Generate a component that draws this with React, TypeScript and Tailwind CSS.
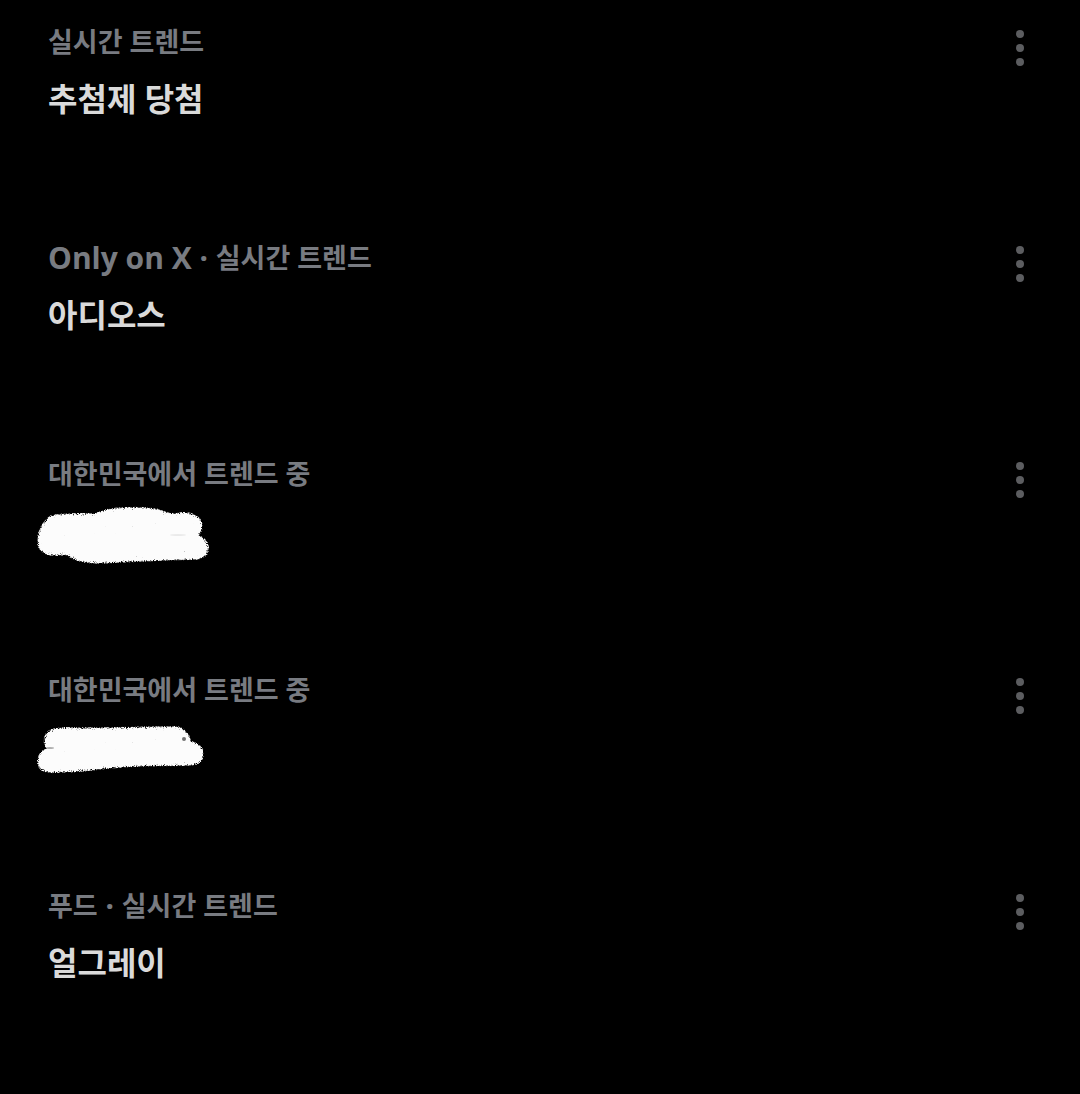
const FONT = "font-['Noto_Sans','Noto_Sans_CJK_KR',sans-serif]";

type Shape = { d: string; holes?: { cx: number; cy: number; rx: number; ry: number; o: number }[] };
type Trend = { prefix?: string; latin?: boolean; context: string; title?: string; scribble?: Shape };

const trends: Trend[] = [
  { context: '실시간 트렌드', title: '추첨제 당첨' },
  { prefix: 'Only on X', latin: true, context: '실시간 트렌드', title: '아디오스' },
  {
    context: '대한민국에서 트렌드 중',
    scribble: {
      d: 'M8 42C8 32 12 23 21 16C34 13 50 14 66 14C76 7 105 7 124 9C132 10 137 15 146 14C160 11 172 16 172 26C172 31 169 34 166 36C174 37 178 42 178 48C178 56 172 59 164 59C140 59 110 61 84 62C62 64 45 62 37 54C24 56 8 56 8 42Z',
      holes: [{ cx: 148, cy: 35, rx: 8, ry: 1, o: 0.07 }],
    },
  },
  {
    context: '대한민국에서 트렌드 중',
    scribble: {
      d: 'M8 45C8 38 13 34 20 33C14 31 14 26 15 21C18 13 24 13 34 12C70 13 110 11 146 11C152 11 154 15 156 17C160 19 160 23 159 26C168 26 173 32 173 38C173 47 166 49 156 49C120 49 90 50 68 53C52 55 38 56 24 56C14 57 8 53 8 45Z',
      holes: [
        { cx: 154, cy: 23, rx: 2, ry: 2, o: 0.55 },
        { cx: 20, cy: 32, rx: 4, ry: 1, o: 0.3 },
      ],
    },
  },
  { prefix: '푸드', context: '실시간 트렌드', title: '얼그레이' },
];

function Scribble({ shape, id }: { shape: Shape; id: string }) {
  return (
    <svg className="absolute -left-4.5 -top-2 h-20 w-60" viewBox="0 0 240 80" aria-hidden="true">
      <defs>
        <filter id={id} x="0" y="0" width="240" height="80" filterUnits="userSpaceOnUse" colorInterpolationFilters="sRGB">
          <feGaussianBlur in="SourceAlpha" stdDeviation="2.5" result="soft" />
          <feTurbulence type="fractalNoise" baseFrequency="0.9" numOctaves="2" seed="4" />
          <feColorMatrix values="0 0 0 0 0  0 0 0 0 0  0 0 0 0 0  1 0 0 0 0" result="noise" />
          <feComposite in="soft" in2="noise" operator="arithmetic" k2="4" k3="4" k4="-3.7" />
          <feComposite in2="SourceAlpha" operator="in" />
          <feColorMatrix values="0 0 0 0 0.99  0 0 0 0 0.99  0 0 0 0 0.99  0 0 0 1 0" />
        </filter>
      </defs>
      <path d={shape.d} fill="#fff" stroke="#fff" strokeWidth="2" filter={`url(#${id})`} />
      {shape.holes?.map((h, i) => (
        <ellipse key={i} cx={h.cx} cy={h.cy} rx={h.rx} ry={h.ry} fill="#000" opacity={h.o} />
      ))}
    </svg>
  );
}

function TrendRow({ trend, index }: { trend: Trend; index: number }) {
  return (
    <li className="flex h-54 items-start justify-between pl-12 pr-10 pt-6">
      <div>
        <p className="flex h-9 items-center whitespace-pre text-[27px] font-bold leading-9 text-[#787b81]">
          {trend.prefix && (
            <>
              <span className={trend.latin ? "font-['Open_Sans',sans-serif] text-[30px]" : ''}>{trend.prefix}</span>
              <span className="text-[30px]"> · </span>
            </>
          )}
          <span>{trend.context}</span>
        </p>
        <div className="relative mt-4 h-11">
          {trend.title && <h2 className="text-[32px] font-bold leading-[46px] text-[#dadada]">{trend.title}</h2>}
          {trend.scribble && <Scribble shape={trend.scribble} id={`grain-${index}`} />}
        </div>
      </div>
      <button type="button" aria-label="더 보기" className="flex h-12 w-10 items-center justify-center text-[#5c5d60]">
        <svg className="h-9 w-2" viewBox="0 0 8 36" fill="currentColor" aria-hidden="true">
          <circle cx="4" cy="4" r="4" />
          <circle cx="4" cy="18" r="4" />
          <circle cx="4" cy="32" r="4" />
        </svg>
      </button>
    </li>
  );
}

export default function App() {
  return (
    <main lang="ko" className={`min-h-screen bg-black ${FONT}`}>
      <ul>
        {trends.map((t, i) => (
          <TrendRow key={i} trend={t} index={i} />
        ))}
      </ul>
    </main>
  );
}
